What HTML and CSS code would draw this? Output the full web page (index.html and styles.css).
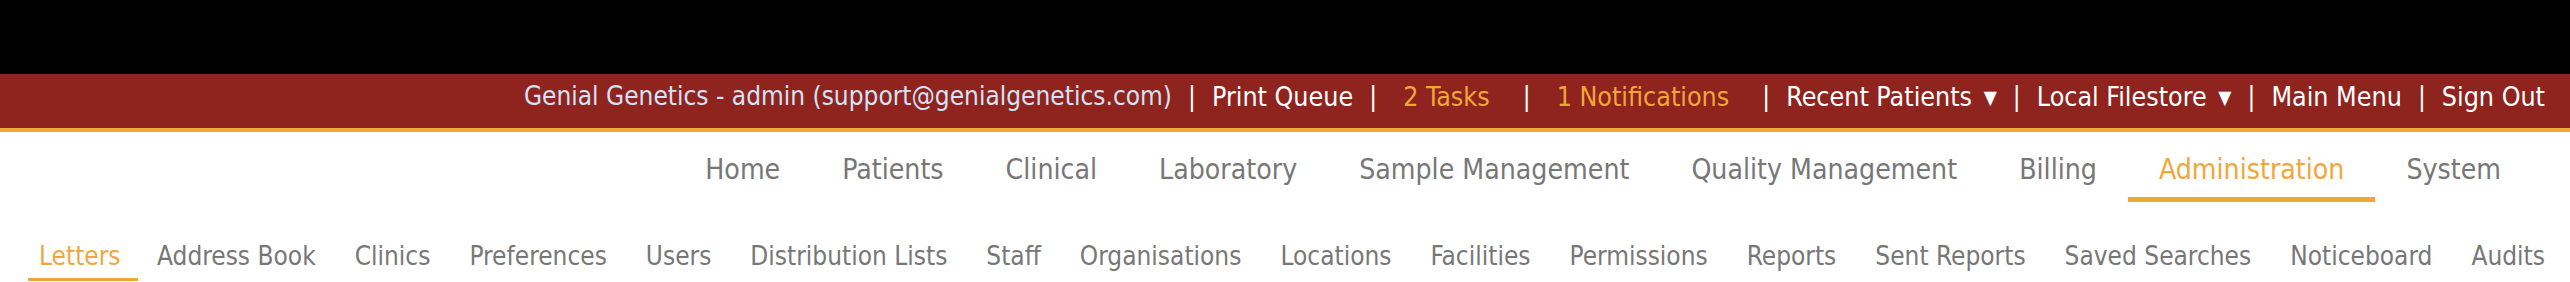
FILE: index.html
```html
<!DOCTYPE html>
<html lang="en">
<head>
<meta charset="utf-8">
<title>Administration - Letters</title>
<link rel="stylesheet" href="styles.css">
</head>
<body>
<div class="topbar"></div>
<header class="header">
  <span class="user">Genial Genetics - admin (support@genialgenetics.com)</span>
  <span class="sep">|</span>
  <a class="hlink" href="#">Print Queue</a>
  <span class="sep">|</span>
  <a class="hlink alert" href="#">2 Tasks</a>
  <span class="sep">|</span>
  <a class="hlink alert" href="#">1 Notifications</a>
  <span class="sep">|</span>
  <a class="hlink" href="#">Recent Patients <span class="caret">▼</span></a>
  <span class="sep">|</span>
  <a class="hlink" href="#">Local Filestore <span class="caret">▼</span></a>
  <span class="sep">|</span>
  <a class="hlink" href="#">Main Menu</a>
  <span class="sep">|</span>
  <a class="hlink" href="#">Sign Out</a>
</header>
<nav class="mainnav">
  <a class="mitem" href="#">Home</a>
  <a class="mitem" href="#">Patients</a>
  <a class="mitem" href="#">Clinical</a>
  <a class="mitem" href="#">Laboratory</a>
  <a class="mitem" href="#">Sample Management</a>
  <a class="mitem" href="#">Quality Management</a>
  <a class="mitem" href="#">Billing</a>
  <a class="mitem active" href="#">Administration</a>
  <a class="mitem" href="#">System</a>
</nav>
<nav class="subnav">
  <a class="sitem active" href="#">Letters</a>
  <a class="sitem" href="#">Address Book</a>
  <a class="sitem" href="#">Clinics</a>
  <a class="sitem" href="#">Preferences</a>
  <a class="sitem" href="#">Users</a>
  <a class="sitem" href="#">Distribution Lists</a>
  <a class="sitem" href="#">Staff</a>
  <a class="sitem" href="#">Organisations</a>
  <a class="sitem" href="#">Locations</a>
  <a class="sitem" href="#">Facilities</a>
  <a class="sitem" href="#">Permissions</a>
  <a class="sitem" href="#">Reports</a>
  <a class="sitem" href="#">Sent Reports</a>
  <a class="sitem" href="#">Saved Searches</a>
  <a class="sitem" href="#">Noticeboard</a>
  <a class="sitem" href="#">Audits</a>
</nav>
</body>
</html>
```

FILE: styles.css
```css
html, body {
  margin: 0;
  padding: 0;
  background: #ffffff;
}
body {
  font-family: "DejaVu Sans Condensed", "DejaVu Sans", sans-serif;
  font-stretch: condensed;
  overflow: hidden;
}
a {
  text-decoration: none;
}
.topbar {
  height: 74px;
  background: #000000;
}
.header {
  box-sizing: border-box;
  height: 58px;
  padding: 0 25px 10px 0;
  background: #8f231e;
  border-bottom: 4px solid #f0a73a;
  display: flex;
  justify-content: flex-end;
  align-items: center;
  font-size: 26px;
  color: #ffffff;
  white-space: nowrap;
}
.user {
  color: #d3e2f7;
}
.hlink {
  color: #ffffff;
  font-size: 26.6px;
}
.hlink.alert {
  color: #f0a73a;
  padding: 0 17px 0 10px;
}
.sep {
  width: 40px;
  text-align: center;
  color: #ffffff;
}
.caret {
  font-size: 19px;
  vertical-align: 2px;
  margin-left: 4px;
}
.mainnav {
  display: flex;
  justify-content: flex-end;
  padding: 20px 38px 0 0;
}
.mitem {
  font-size: 28.2px;
  line-height: 36px;
  padding: 0 31px 9px;
  border-bottom: 5px solid transparent;
  color: #777777;
  white-space: nowrap;
}
.mitem.active {
  color: #f0a73a;
  border-bottom-color: #f0a73a;
}
.subnav {
  display: flex;
  padding: 38px 0 0 28px;
}
.sitem {
  font-size: 26px;
  line-height: 32px;
  padding: 0 19.5px 6px;
  border-bottom: 3px solid transparent;
  color: #777777;
  white-space: nowrap;
}
.sitem:first-child {
  padding-left: 11px;
  padding-right: 17px;
}
.sitem.active {
  color: #f0a73a;
  border-bottom-color: #f0a73a;
}
```
